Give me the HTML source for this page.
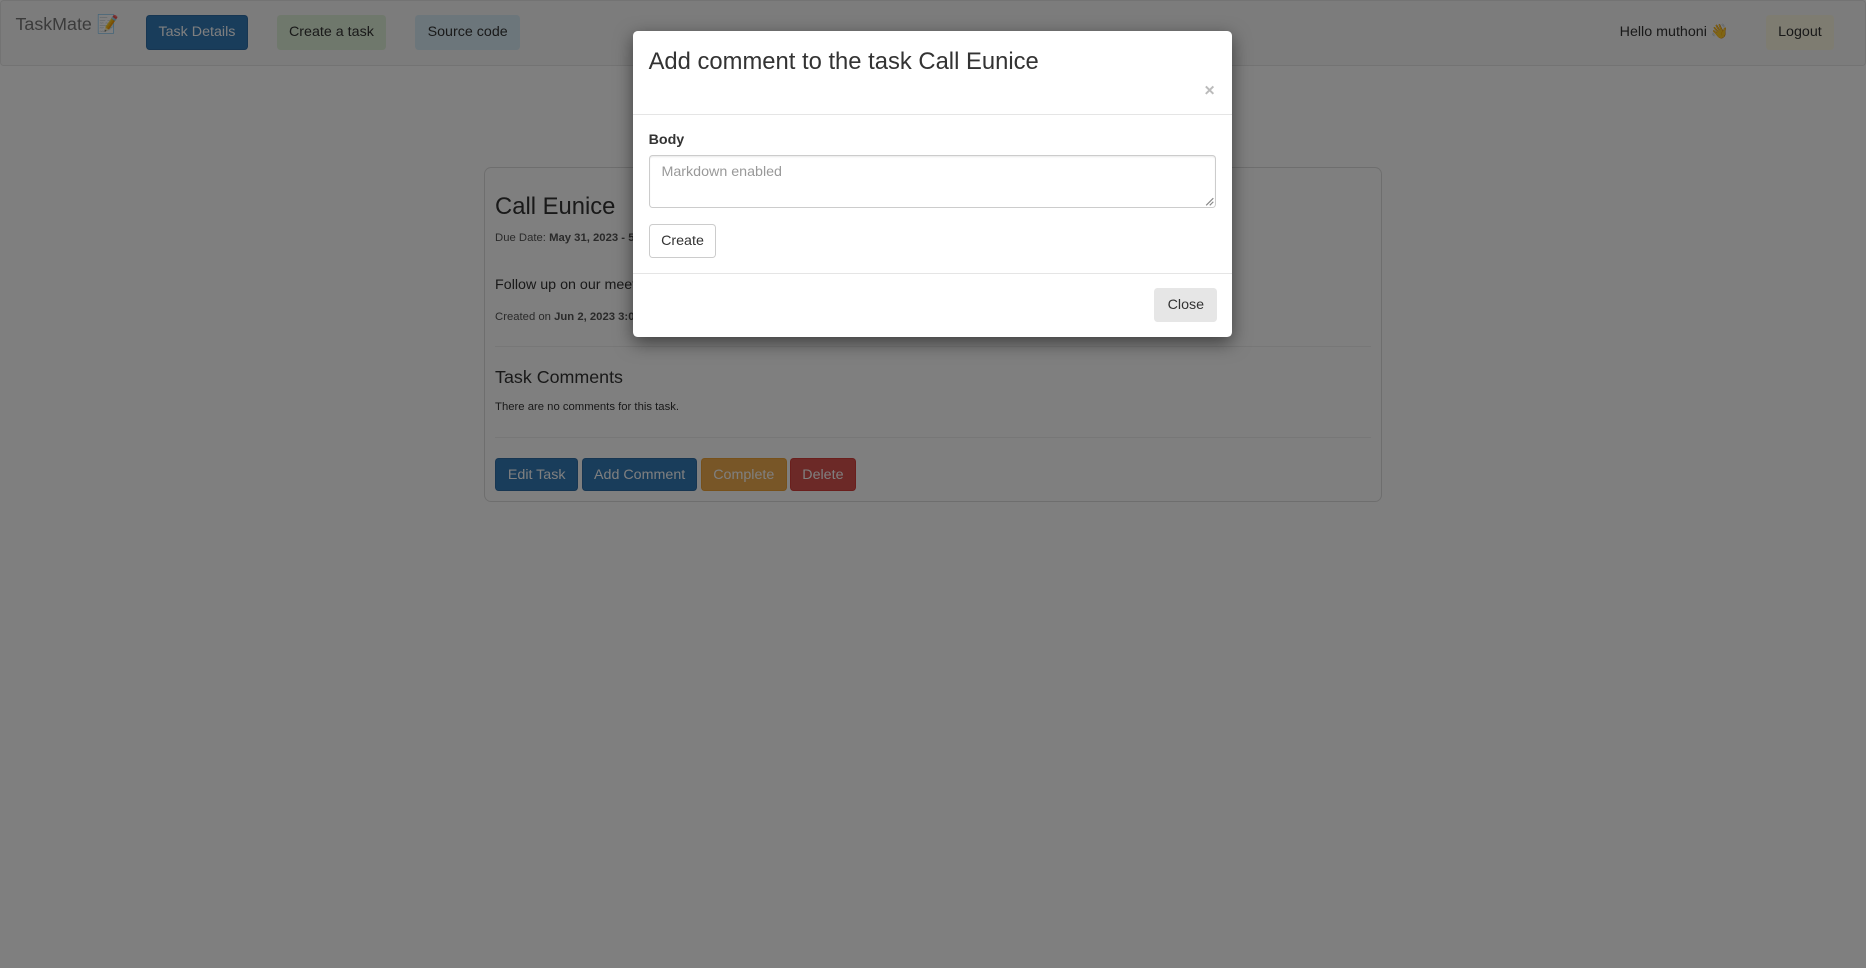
<!DOCTYPE html>
<html><head><meta charset="utf-8"><style>
html,body{margin:0;padding:0;width:1866px;height:968px;overflow:hidden;background:#fff;font-family:"Liberation Sans",sans-serif;color:#333}
#w{zoom:1.19005;width:1568px;height:813px;position:relative}
.a{position:absolute}
.nav{left:0;top:0;width:1566px;height:54px;border:1px solid #e7e7e7;background:#f8f8f8;border-radius:3px}
.btn{position:absolute;box-sizing:border-box;border-radius:3px;font-size:12px;text-align:center;border:1px solid transparent}
.card{left:407px;top:140px;width:754px;height:282px;border:1px solid #ddd;border-radius:6px;box-sizing:border-box}
.ov{left:0;top:0;width:1568px;height:813px;background:rgba(0,0,0,.5)}
.modal{left:532px;top:26px;width:503px;height:257px;background:#fff;border-radius:4px;box-shadow:0 5px 15px rgba(0,0,0,.5)}
</style></head><body><div id="w">
<div class="a nav"></div>
<div class="a" style="left:13px;top:12px;font-size:15px;color:#777">TaskMate 📝</div>
<div class="btn" style="left:123px;top:13px;width:85px;height:29px;line-height:28px;background:#337ab7;border-color:#2e6da4;color:#fff">Task Details</div>
<div class="btn" style="left:233px;top:13px;width:91px;height:29px;line-height:28px;background:#dff0d8;color:#333">Create a task</div>
<div class="btn" style="left:349px;top:13px;width:88px;height:29px;line-height:28px;background:#d9edf7;color:#333">Source code</div>
<div class="a" style="left:1361px;top:20px;font-size:12px;color:#333">Hello muthoni 👋</div>
<div class="btn" style="left:1484px;top:13px;width:57px;height:29px;line-height:28px;background:#fcf8e3;color:#333">Logout</div>

<div class="a card"></div>
<div class="a" style="left:416px;top:162px;font-size:20px">Call Eunice</div>
<div class="a" style="left:416px;top:195px;font-size:9.5px;color:#555">Due Date: <b>May 31, 2023 - 5:00 p.m.</b></div>
<div class="a" style="left:416px;top:233px;font-size:12px">Follow up on our meeting</div>
<div class="a" style="left:416px;top:261px;font-size:9.5px;color:#555">Created on <b>Jun 2, 2023 3:00 p.m.</b></div>
<div class="a" style="left:416px;top:291px;width:736px;border-top:1px solid #eee"></div>
<div class="a" style="left:416px;top:308px;font-size:15px">Task Comments</div>
<div class="a" style="left:416px;top:337px;font-size:9.5px">There are no comments for this task.</div>
<div class="a" style="left:416px;top:367px;width:736px;border-top:1px solid #eee"></div>
<div class="btn" style="left:416px;top:385px;width:70px;height:28px;line-height:27px;background:#337ab7;border-color:#2e6da4;color:#fff">Edit Task</div>
<div class="btn" style="left:489px;top:385px;width:97px;height:28px;line-height:27px;background:#337ab7;border-color:#2e6da4;color:#fff">Add Comment</div>
<div class="btn" style="left:589px;top:385px;width:72px;height:28px;line-height:27px;background:#f0ad4e;border-color:#eea236;color:#fff">Complete</div>
<div class="btn" style="left:664px;top:385px;width:55px;height:28px;line-height:27px;background:#d9534f;border-color:#d43f3a;color:#fff">Delete</div>

<div class="a ov"></div>
<div class="a modal">
<div class="a" style="left:13px;top:14px;font-size:20px;color:#333">Add comment to the task Call Eunice</div>
<div class="a" style="left:480px;top:41px;font-size:15px;color:#bbb;font-weight:bold">×</div>
<div class="a" style="left:0;top:70px;width:503px;border-top:1px solid #e5e5e5"></div>
<div class="a" style="left:13px;top:85px;font-size:12px;font-weight:bold">Body</div>
<div class="a" style="left:13px;top:104px;width:477px;height:45px;border:1px solid #ccc;border-radius:3px;box-sizing:border-box;box-shadow:inset 0 1px 1px rgba(0,0,0,.075)">
<div class="a" style="left:10px;top:7px;font-size:12px;color:#999">Markdown enabled</div>
<svg class="a" style="right:1px;bottom:1px" width="8" height="8"><path d="M7 1L1 7M7 4L4 7" stroke="#888" stroke-width="1"/></svg>
</div>
<div class="btn" style="left:13px;top:162px;width:57px;height:29px;line-height:28px;background:#fff;border-color:#ccc;color:#333">Create</div>
<div class="a" style="left:0;top:203px;width:503px;border-top:1px solid #e5e5e5"></div>
<div class="btn" style="left:438px;top:216px;width:53px;height:29px;line-height:28px;background:#e6e6e6;border-color:#e6e6e6;color:#333">Close</div>
</div>
</div></body></html>
